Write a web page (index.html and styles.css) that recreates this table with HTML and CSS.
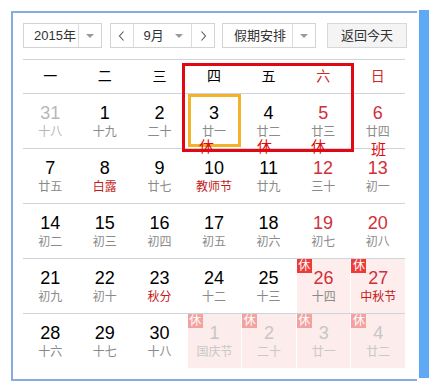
FILE: index.html
```html
<!DOCTYPE html>
<html lang="zh-CN">
<head>
<meta charset="utf-8">
<title>日历</title>
<link rel="stylesheet" href="styles.css">
</head>
<body>
<div class="page">
  <div class="frame">
    <div class="toolbar">
      <div class="select year">
        <span class="sel-text">2015年</span>
        <span class="sel-arrow"><i class="caret"></i></span>
      </div>
      <div class="select month">
        <span class="nav"><svg width="7" height="10" viewBox="0 0 7 10"><polyline points="5.5,0.5 1.5,5 5.5,9.5" fill="none" stroke="#555" stroke-width="1.1"/></svg></span>
        <span class="month-mid"><span class="sel-text">9月</span><i class="caret"></i></span>
        <span class="nav"><svg width="7" height="10" viewBox="0 0 7 10"><polyline points="1.5,0.5 5.5,5 1.5,9.5" fill="none" stroke="#555" stroke-width="1.1"/></svg></span>
      </div>
      <div class="select holiday">
        <span class="sel-text">假期安排</span>
        <span class="sel-arrow"><i class="caret"></i></span>
      </div>
      <div class="btn-today">返回今天</div>
    </div>

    <div class="cal">
      <div class="week-head">
        <span>一</span><span>二</span><span>三</span><span>四</span><span>五</span><span class="wk">六</span><span class="wk">日</span>
      </div>
      <div class="week">
        <div class="cell other"><span class="num">31</span><span class="lunar">十八</span></div>
        <div class="cell"><span class="num">1</span><span class="lunar">十九</span></div>
        <div class="cell"><span class="num">2</span><span class="lunar">二十</span></div>
        <div class="cell"><span class="num">3</span><span class="lunar">廿一</span></div>
        <div class="cell"><span class="num">4</span><span class="lunar">廿二</span></div>
        <div class="cell wkd"><span class="num">5</span><span class="lunar">廿三</span></div>
        <div class="cell wkd"><span class="num">6</span><span class="lunar">廿四</span></div>
      </div>
      <div class="week">
        <div class="cell"><span class="num">7</span><span class="lunar">廿五</span></div>
        <div class="cell"><span class="num">8</span><span class="lunar fest">白露</span></div>
        <div class="cell"><span class="num">9</span><span class="lunar">廿七</span></div>
        <div class="cell"><span class="num">10</span><span class="lunar fest">教师节</span></div>
        <div class="cell"><span class="num">11</span><span class="lunar">廿九</span></div>
        <div class="cell wkd"><span class="num">12</span><span class="lunar">三十</span></div>
        <div class="cell wkd"><span class="num">13</span><span class="lunar">初一</span></div>
      </div>
      <div class="week">
        <div class="cell"><span class="num">14</span><span class="lunar">初二</span></div>
        <div class="cell"><span class="num">15</span><span class="lunar">初三</span></div>
        <div class="cell"><span class="num">16</span><span class="lunar">初四</span></div>
        <div class="cell"><span class="num">17</span><span class="lunar">初五</span></div>
        <div class="cell"><span class="num">18</span><span class="lunar">初六</span></div>
        <div class="cell wkd"><span class="num">19</span><span class="lunar">初七</span></div>
        <div class="cell wkd"><span class="num">20</span><span class="lunar">初八</span></div>
      </div>
      <div class="week">
        <div class="cell"><span class="num">21</span><span class="lunar">初九</span></div>
        <div class="cell"><span class="num">22</span><span class="lunar">初十</span></div>
        <div class="cell"><span class="num">23</span><span class="lunar fest">秋分</span></div>
        <div class="cell"><span class="num">24</span><span class="lunar">十二</span></div>
        <div class="cell"><span class="num">25</span><span class="lunar">十三</span></div>
        <div class="cell wkd rest"><i class="badge">休</i><span class="num">26</span><span class="lunar">十四</span></div>
        <div class="cell wkd rest"><i class="badge">休</i><span class="num">27</span><span class="lunar fest">中秋节</span></div>
      </div>
      <div class="week last">
        <div class="cell"><span class="num">28</span><span class="lunar">十六</span></div>
        <div class="cell"><span class="num">29</span><span class="lunar">十七</span></div>
        <div class="cell"><span class="num">30</span><span class="lunar">十八</span></div>
        <div class="cell rest next"><i class="badge">休</i><span class="num">1</span><span class="lunar fest">国庆节</span></div>
        <div class="cell rest next"><i class="badge">休</i><span class="num">2</span><span class="lunar">二十</span></div>
        <div class="cell rest next"><i class="badge">休</i><span class="num">3</span><span class="lunar">廿一</span></div>
        <div class="cell rest next"><i class="badge">休</i><span class="num">4</span><span class="lunar">廿二</span></div>
      </div>
    </div>
  </div>
  <div class="band"></div>

  <div class="mark-red"></div>
  <div class="mark-today"></div>
  <span class="note n1">休</span>
  <span class="note n2">休</span>
  <span class="note n3">休</span>
  <span class="note n4">班</span>
</div>
</body>
</html>
```

FILE: styles.css
```css
html, body {
  margin: 0;
  padding: 0;
  background: #fff;
}
body {
  font-family: "Liberation Sans", "Noto Sans CJK SC", sans-serif;
  color: #000;
}
.page {
  position: relative;
  display: flex;
  align-items: flex-start;
  width: 429px;
  height: 387px;
  overflow: hidden;
}
.frame {
  margin: 11px 0 0 11px;
  border: 2px solid #84acdf;
  border-right: 0;
  padding: 10px 0 11px 10px;
  box-sizing: content-box;
  width: 394px;
  background: #fff;
}
.band {
  margin: 10px 0 0 2px;
  width: 10px;
  height: 368px;
  background: #5fa9f4;
}

/* toolbar */
.toolbar {
  display: flex;
  height: 25px;
  margin-bottom: 11px;
  font-size: 13px;
  color: #333;
}
.select {
  display: flex;
  height: 25px;
  box-sizing: border-box;
  border: 1px solid #d3d3d3;
  background: #fff;
}
.sel-text {
  line-height: 23px;
}
.sel-arrow {
  display: flex;
  align-items: center;
  justify-content: center;
  width: 22px;
  border-left: 1px solid #dcdcdc;
}
.caret {
  display: block;
  width: 0;
  height: 0;
  border-left: 4px solid transparent;
  border-right: 4px solid transparent;
  border-top: 4px solid #9a9a9a;
}
.year {
  width: 79px;
  margin-right: 8px;
}
.year .sel-text {
  width: 45px;
  padding-left: 10px;
}
.month {
  width: 105px;
  margin-right: 7px;
}
.nav {
  display: flex;
  align-items: center;
  justify-content: center;
  width: 22px;
}
.month-mid {
  display: flex;
  align-items: center;
  width: 59px;
  border-left: 1px solid #dcdcdc;
  border-right: 1px solid #dcdcdc;
}
.month-mid .sel-text {
  padding-left: 10px;
}
.month-mid .caret {
  margin-left: auto;
  margin-right: 8px;
}
.holiday {
  width: 94px;
  margin-right: 11px;
}
.holiday .sel-text {
  width: 59px;
  padding-left: 11px;
}
.btn-today {
  width: 80px;
  height: 25px;
  box-sizing: border-box;
  border: 1px solid #d8d8d8;
  background: #f4f4f4;
  text-align: center;
  line-height: 23px;
}

/* calendar */
.cal {
  width: 382px;
  border-top: 1px solid #cdd4de;
}
.week-head {
  display: grid;
  grid-template-columns: repeat(7, 1fr);
  height: 33px;
  border-bottom: 1px solid #cdd4de;
  font-size: 14px;
  line-height: 33px;
  text-align: center;
}
.week-head .wk {
  color: #cc2a2a;
}
.week {
  display: grid;
  grid-template-columns: repeat(7, 1fr);
  height: 54px;
  border-bottom: 1px solid #cdd4de;
}
.week.last {
  border-bottom: 0;
}
.cell {
  position: relative;
  display: flex;
  flex-direction: column;
  align-items: center;
  padding-top: 7px;
}
.num {
  font-size: 18px;
  line-height: 24px;
  color: #000;
}
.lunar {
  font-size: 12px;
  line-height: 14px;
  color: #8a8a8a;
}
.lunar.fest {
  color: #c41a1a;
}
.wkd .num {
  color: #d0303a;
}
.other .num {
  color: #b8b8b8;
}
.other .lunar {
  color: #b8b8b8;
}
.rest {
  background: #fdeded;
  margin-left: 1px;
}
.badge {
  position: absolute;
  left: 0;
  top: 0;
  width: 15px;
  height: 14px;
  background: #ee3b38;
  color: #fff;
  font-style: normal;
  font-size: 12px;
  line-height: 14px;
  text-align: center;
}
.next {
  background: #fcecec;
}
.next .badge {
  background: #f3a39f;
}
.next .num {
  color: #c6c6c6;
}
.next .lunar,
.next .lunar.fest {
  color: #c8c8c8;
}

/* annotations drawn over the screenshot */
.mark-red {
  position: absolute;
  left: 182px;
  top: 63px;
  width: 172px;
  height: 89px;
  box-sizing: border-box;
  border: 3px solid #e30613;
}
.mark-today {
  position: absolute;
  left: 188px;
  top: 94px;
  width: 53px;
  height: 53px;
  box-sizing: border-box;
  border: 3px solid #f2b32a;
}
.note {
  position: absolute;
  font-size: 15px;
  line-height: 12px;
  color: #e20a0a;
}
.n1 { left: 199px; top: 141px; }
.n2 { left: 257px; top: 141px; }
.n3 { left: 311px; top: 141px; }
.n4 { left: 371px; top: 144px; }
```
